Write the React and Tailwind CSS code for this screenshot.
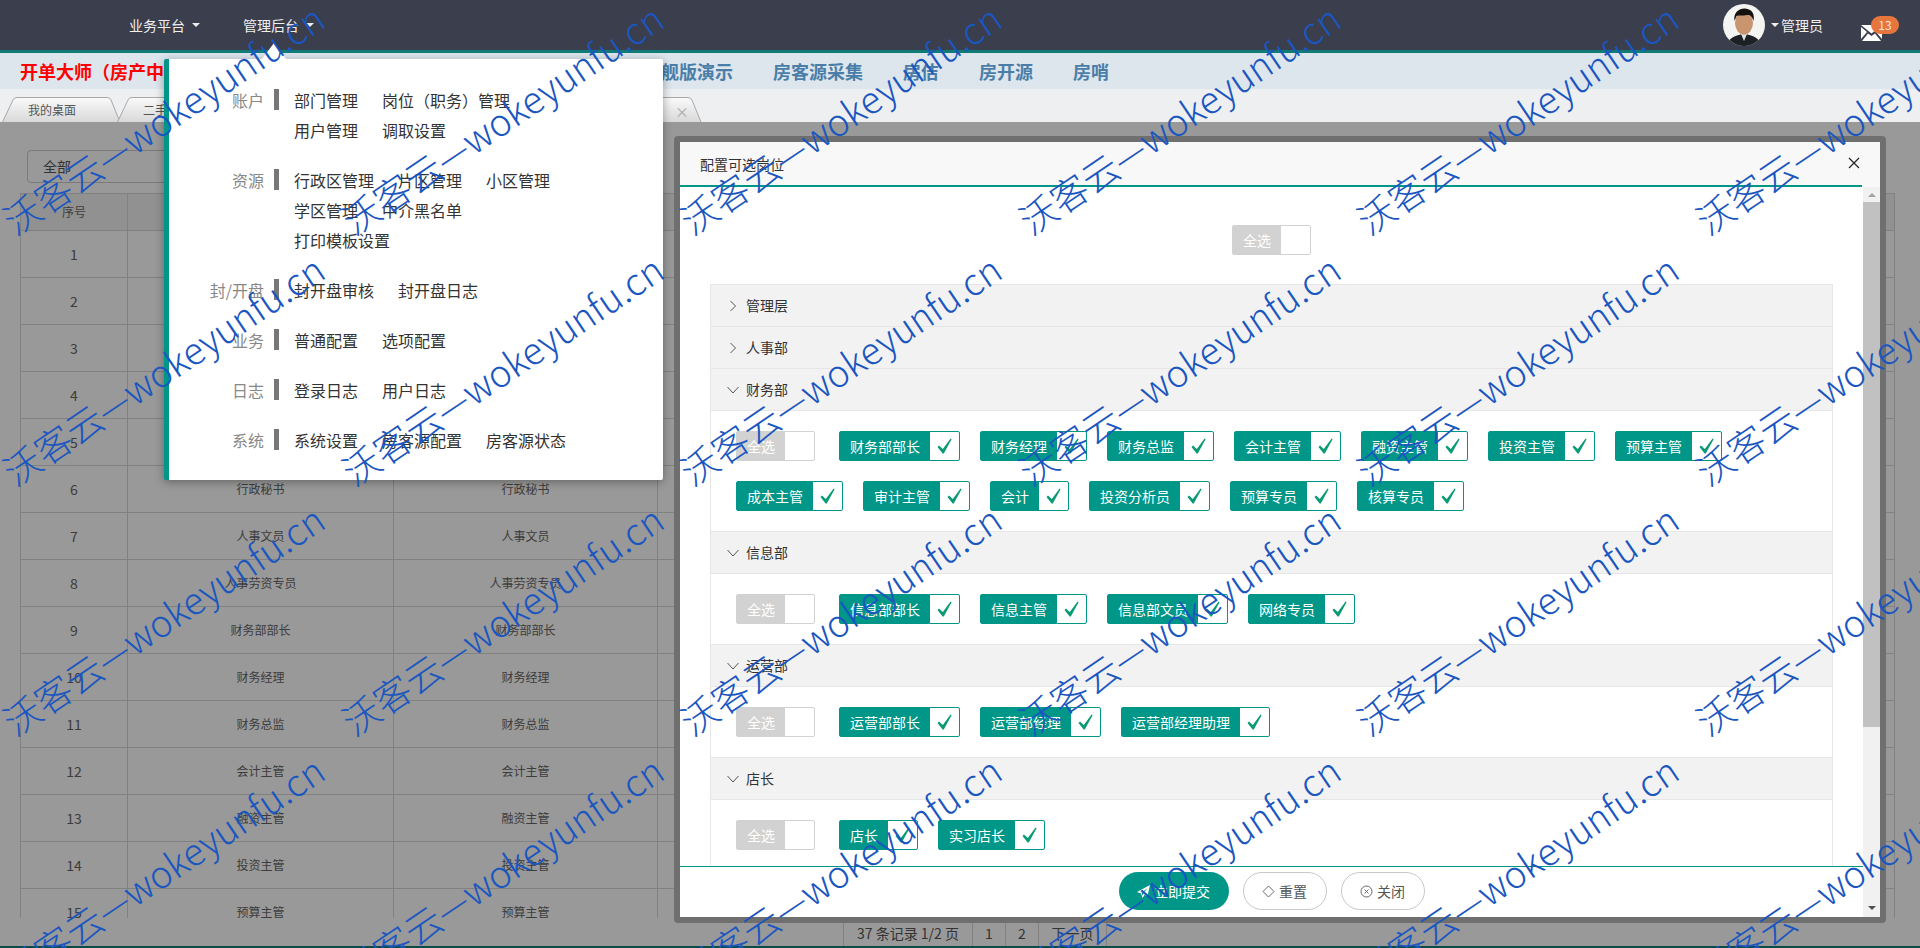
import React from "react";

const font = "font-['Noto_Sans_CJK_SC',sans-serif]";
const names = ["总经理","副总经理","总经理助理","行政经理","行政主管","行政秘书","人事文员","人事劳资专员","财务部部长","财务经理","财务总监","会计主管","融资主管","投资主管","预算主管"];

function Check() {
  return (
    <svg width="16" height="16" viewBox="0 0 16 16" className="block">
      <path d="M0.5 9 L2 7.6 L5.8 11 L13.6 0.6 L14.6 1.2 L6.8 15.4 L5.6 15.4 Z" fill="#0b9a75" />
    </svg>
  );
}

function Chip({ label, on = true, mr = "" }) {
  return (
    <div className={`flex h-[30px] rounded-[2px] border ${on ? "border-[#009688]" : "border-[#d2d2d2]"} bg-white ${mr}`}>
      <span className={`flex items-center justify-center px-[10px] text-[14px] text-white ${on ? "bg-[#009688]" : "bg-[#d2d2d2]"}`}>{label}</span>
      <span className="flex w-[29px] items-center justify-center">{on ? <Check /> : null}</span>
    </div>
  );
}

function Panel({ title, open, chips }) {
  return (
    <div>
      <div className="flex h-[43px] items-center border-b border-t border-[#e6e6e6] bg-[#f2f2f2] pl-[16px] text-[14px] text-[#333] -mt-px">
        <svg width="12" height="12" viewBox="0 0 12 12" fill="none" stroke="#555" strokeWidth="1" className="mr-[7px]">
          {open ? <path d="M0.5 3 L6 9 L11.5 3" /> : <path d="M3.5 1 L8.5 6 L3.5 11" />}
        </svg>
        {title}
      </div>
      {open ? (
        <div className="flex flex-wrap gap-x-[20px] gap-y-[20px] border-b border-[#e6e6e6] px-[25px] py-[20px]">
          <Chip label="全选" on={false} mr="mr-[4px]" />
          {chips.map((c) => <Chip key={c} label={c} />)}
        </div>
      ) : null}
    </div>
  );
}

function MenuGroup({ label, links }) {
  return (
    <div className="mb-[20px] flex">
      <div className="w-[95px] shrink-0 pr-0 text-right text-[16px] leading-[30px] text-[#888]">{label}</div>
      <div className="mx-[10px] mt-[4px] h-[21px] w-[5px] shrink-0 bg-[#777]" />
      <div className="ml-[5px] flex w-[284px] flex-wrap gap-x-[24px]">
        {links.map((l) => <span key={l} className="text-[16px] leading-[30px] text-[#333]">{l}</span>)}
      </div>
    </div>
  );
}

function Tab({ label, w, close, ml = "" }) {
  const d = `M0.5 25 L11 3 Q12 0.5 15 0.5 L${w - 22} 0.5 Q${w - 19} 0.5 ${w - 18} 3 L${w - 9} 25`;
  return (
    <div className={`relative flex h-[25px] shrink-0 items-center ${ml}`} style={{ width: w }}>
      <svg width={w} height="25" className="absolute left-0 top-0">
        <defs>
          <linearGradient id="tabg" x1="0" y1="0" x2="0" y2="1">
            <stop offset="0" stopColor="#fafafa" />
            <stop offset="1" stopColor="#d9d9d9" />
          </linearGradient>
        </defs>
        <path d={d} fill="url(#tabg)" stroke="#a8a8a8" />
      </svg>
      <span className="relative ml-[26px] text-[12px] text-[#555]">{label}</span>
      {close ? <span className="absolute right-[21px] top-[4px] text-[14px] text-[#aaa]">×</span> : null}
    </div>
  );
}

const pos = [];
for (let r = 0; r < 5; r++) for (let c = 0; c < 6; c++) pos.push({ x: 17 + c * 338.6, y: 239 + (r - 1) * 250.5 });

export default function App() {
  return (
    <div className={`relative flex h-[948px] w-[1920px] flex-col overflow-hidden bg-white ${font}`}>
      <header className="flex h-[53px] shrink-0 items-center border-b-[3px] border-[#0f7d75] bg-[#3b3e4c] text-[14px] text-[#f0f0f0]">
        <div className="ml-[129px] flex items-center">
          业务平台<span className="ml-[7px] border-x-[4px] border-t-[4px] border-x-transparent border-t-[#eee]" />
        </div>
        <div className="ml-[43px] flex items-center">
          管理后台<span className="ml-[7px] border-x-[4px] border-t-[4px] border-x-transparent border-t-[#eee]" />
        </div>
        <div className="ml-auto mr-[38px] flex items-center">
          <svg width="42" height="42" viewBox="0 0 42 42" className="rounded-full">
            <rect width="42" height="42" fill="#f4f4f2" />
            <path d="M4 42 C5 34 12 31 21 30 C30 31 37 34 38 42 Z" fill="#1c2024" />
            <path d="M18 30 L21 37 L24 30 Z" fill="#dfe3e3" />
            <ellipse cx="21" cy="19" rx="9" ry="11.5" fill="#c9956e" />
            <path d="M11.5 17 C10 8 17 4 22 4.5 C29 5 32 10 30.5 17 C29 12 27 10.500 24 11 C20 12 15 11 13.500 12 Z" fill="#14110f" />
          </svg>
          <span className="ml-[6px] border-x-[4px] border-t-[4px] border-x-transparent border-t-[#eee]" />
          <span className="ml-[2px] text-[14px]">管理员</span>
          <div className="relative ml-[38px] mt-[16px] h-[16px] w-[21px]">
            <svg width="21" height="16" viewBox="0 0 21 16" className="block">
              <path d="M0 0 L10.500 8.500 L21 0 Z M0 2 L0 14 L6 7 Z M21 2 L21 14 L15 7 Z M1 16 L7 8.500 L10.500 11 L14 8.500 L20 16 Z" fill="#fff" />
            </svg>
            <span className="absolute left-[10px] top-[-9px] flex h-[18px] w-[28px] items-center justify-center rounded-full bg-[#e6763e] text-[12px] text-[#fbe3d6]">13</span>
          </div>
        </div>
      </header>

      <div className="flex h-[36px] shrink-0 items-center bg-[#dde5ed] pl-[20px] text-[18px] font-bold">
        <span className="w-[623px] shrink-0 text-[#f00]">开单大师（房产中介管理系统）</span>
        <div className="flex gap-x-[40px] text-[#4a7ea8]">
          <span>旗舰版演示</span><span>房客源采集</span><span>房佶</span><span>房开源</span><span>房哨</span>
        </div>
      </div>

      <div className="flex h-[33px] shrink-0 items-end bg-[#eeeff1] pl-[2px]">
        <Tab label="我的桌面" w={127} />
        <Tab label="二手房源" w={200} ml="-ml-[12px]" />
        <Tab label="用户管理" w={200} ml="-ml-[12px]" />
        <Tab label="可选岗位管理" w={217} close ml="-ml-[12px]" />
      </div>

      <main className="relative flex min-h-0 flex-1 flex-col bg-white pt-[28px]">
        <div className="ml-[27px] flex h-[33px] w-[300px] items-center rounded-[4px] border border-[#ccc] pl-[15px] text-[14px] text-[#555]">全部</div>
        <div className="ml-[20px] mt-[10px] h-[725px] w-[1875px] shrink-0 overflow-hidden">
          <table className="w-full table-fixed border-collapse text-center text-[12px] text-[#666]">
            <colgroup>
              <col className="w-[107px]" /><col className="w-[266px]" /><col className="w-[264px]" /><col />
            </colgroup>
            <thead>
              <tr className="h-[37px] bg-[#f2f2f2]">
                <th className="border border-[#d8d8d8] font-normal">序号</th>
                <th className="border border-[#d8d8d8] font-normal">岗位名称</th>
                <th className="border border-[#d8d8d8] font-normal">职务名称</th>
                <th className="border border-[#d8d8d8] font-normal">操作</th>
              </tr>
            </thead>
            <tbody>
              {names.map((n, i) => (
                <tr key={n} className="h-[47px]">
                  <td className="border border-[#d8d8d8] text-[14px]">{i + 1}</td>
                  <td className="border border-[#d8d8d8]">{n}</td>
                  <td className="border border-[#d8d8d8]">{n}</td>
                  <td className="border border-[#d8d8d8]" />
                </tr>
              ))}
            </tbody>
          </table>
        </div>
        <div className="ml-[843px] mt-px flex h-[28px] w-fit items-center border border-b-0 border-[#d8d8d8] text-[14px] text-[#555]">
          <span className="flex h-full items-center border-r border-[#d8d8d8] px-[13px]">37 条记录 1/2 页</span>
          <span className="flex h-full w-[33px] items-center justify-center border-r border-[#d8d8d8]">1</span>
          <span className="flex h-full w-[33px] items-center justify-center border-r border-[#d8d8d8]">2</span>
          <span className="flex h-full w-[67px] items-center justify-center">下一页</span>
        </div>
        <div className="absolute bottom-0 left-0 h-[2px] w-full bg-[#0f7d75]" />
        <div className="absolute inset-0 bg-black/40" />

        {/* Layer dialog */}
        <div className="absolute left-[674px] top-[14px] flex h-[787px] w-[1212px] flex-col overflow-hidden rounded-[4px] border-[6px] border-[#6f6f6f] bg-white">
          <div className="relative flex h-[45px] shrink-0 items-center border-0 bg-[#f8f8f8] pl-[20px] text-[14px] text-[#333]">
            配置可选岗位
            <svg width="12" height="12" viewBox="0 0 12 12" className="absolute right-[20px] top-[15px]" stroke="#222" strokeWidth="1.200">
              <path d="M1 1 L11 11 M11 1 L1 11" />
            </svg>
            <div className="absolute bottom-0 left-0 h-[2px] w-[1182px] bg-[#009688]" />
          </div>
          <div className="relative flex min-h-0 flex-1">
            <div className="relative min-w-0 flex-1 overflow-hidden">
              <div className="flex h-[98px] justify-center pt-[38px]">
                <Chip label="全选" on={false} />
              </div>
              <div className="mx-[30px] border-x border-[#e6e6e6]">
                <Panel title="管理层" />
                <Panel title="人事部" />
                <Panel title="财务部" open chips={["财务部部长","财务经理","财务总监","会计主管","融资主管","投资主管","预算主管","成本主管","审计主管","会计","投资分析员","预算专员","核算专员"]} />
                <Panel title="信息部" open chips={["信息部部长","信息主管","信息部文员","网络专员"]} />
                <Panel title="运营部" open chips={["运营部部长","运营部经理","运营部经理助理"]} />
                <Panel title="店长" open chips={["店长","实习店长"]} />
              </div>
              <div className="absolute bottom-0 left-0 flex h-[51px] w-full items-start justify-center gap-x-[14px] border-t border-[#009688] bg-white pl-[-1px] pt-[5px] text-[14px]">
                <button className="flex h-[38px] w-[110px] items-center justify-center rounded-full bg-[#009688] text-white">
                  <svg width="13" height="13" viewBox="0 0 13 13" className="mr-[4px]" fill="#fff"><path d="M13 0 L0 7 L4 8.500 L5.500 13 L7.500 10 L10.500 11 Z M4.500 8 L10.500 3 L6 9 L5.800 11 Z" /></svg>
                  立即提交
                </button>
                <button className="flex h-[38px] w-[84px] items-center justify-center rounded-full border border-[#c9c9c9] bg-white text-[#555]">
                  <svg width="13" height="13" viewBox="0 0 13 13" className="mr-[4px]" fill="none" stroke="#666"><path d="M6.500 1 L12 6.500 L6.500 12 L1 6.500 Z" /></svg>
                  重置
                </button>
                <button className="flex h-[38px] w-[84px] items-center justify-center rounded-full border border-[#c9c9c9] bg-white text-[#555]">
                  <svg width="13" height="13" viewBox="0 0 13 13" className="mr-[4px]" fill="none" stroke="#666"><circle cx="6.500" cy="6.500" r="5.500" /><path d="M4.500 4.500 L8.500 8.500 M8.500 4.500 L4.500 8.500" /></svg>
                  关闭
                </button>
              </div>
            </div>
            <div className="flex w-[17px] shrink-0 flex-col bg-[#f1f1f1]">
              <div className="flex h-[15px] items-center justify-center"><span className="border-x-[4px] border-b-[4px] border-x-transparent border-b-[#a3a3a3]" /></div>
              <div className="h-[525px] bg-[#c1c1c1]" />
              <div className="mt-auto flex h-[18px] items-center justify-center"><span className="border-x-[4px] border-t-[4px] border-x-transparent border-t-[#505050]" /></div>
            </div>
          </div>
        </div>
      </main>

      {/* Admin dropdown menu */}
      <div className="absolute left-[164px] top-[59px] h-[421px] w-[499px] rounded-[2px] border-l-[5px] border-[#009688] bg-white pt-[26px] shadow-[0_2px_10px_rgba(0,0,0,0.35)]">
        <span className="absolute left-[93px] top-[-16px] border-x-[12px] border-b-[16px] border-x-transparent border-b-white" />
        <MenuGroup label="账户" links={["部门管理","岗位（职务）管理","用户管理","调取设置"]} />
        <MenuGroup label="资源" links={["行政区管理","片区管理","小区管理","学区管理","中介黑名单","打印模板设置"]} />
        <MenuGroup label="封/开盘" links={["封开盘审核","封开盘日志"]} />
        <MenuGroup label="业务" links={["普通配置","选项配置"]} />
        <MenuGroup label="日志" links={["登录日志","用户日志"]} />
        <MenuGroup label="系统" links={["系统设置","房客源配置","房客源状态"]} />
      </div>

      {/* Watermark */}
      <div className="pointer-events-none absolute inset-0 overflow-hidden">
        {pos.map((p, i) => (
          <span
            key={i}
            className="absolute origin-bottom-left whitespace-nowrap font-['Noto_Sans_CJK_SC',sans-serif] text-[37px] font-light leading-none text-[#1a56c0] -rotate-[34deg]"
            style={{ left: p.x, top: p.y - 37 }}
          >
            沃客云—wokeyunfu.cn
          </span>
        ))}
      </div>
    </div>
  );
}
